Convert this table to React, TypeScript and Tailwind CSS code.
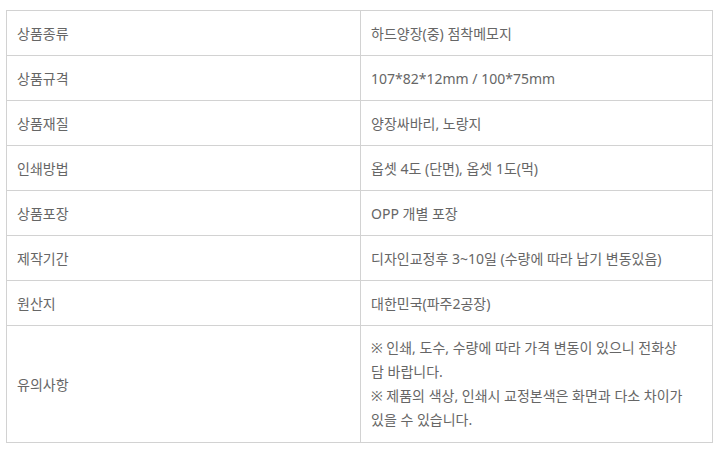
import React from "react";

const rows: [string, string][] = [
  ["상품종류", "하드양장(중) 점착메모지"],
  ["상품규격", "107*82*12mm / 100*75mm"],
  ["상품재질", "양장싸바리, 노랑지"],
  ["인쇄방법", "옵셋 4도 (단면), 옵셋 1도(먹)"],
  ["상품포장", "OPP 개별 포장"],
  ["제작기간", "디자인교정후 3~10일 (수량에 따라 납기 변동있음)"],
  ["원산지", "대한민국(파주2공장)"],
];

export default function App() {
  return (
    <div
      className="w-[720px] h-[452px] bg-white pt-[10px] pl-[6px]"
      style={{ fontFamily: '"Noto Sans", "Noto Sans CJK KR", sans-serif' }}
    >
      <table className="border-collapse w-[707px] text-[14px] text-[#666]">
        <tbody>
          {rows.map(([k, v]) => (
            <tr key={k} className="h-[45px]">
              <td className="border border-[#d2d2d2] w-[354px] pl-[10px] align-middle">{k}</td>
              <td className="border border-[#d2d2d2] pl-[10px] align-middle">{v}</td>
            </tr>
          ))}
          <tr className="h-[117px]">
            <td className="border border-[#d2d2d2] pl-[10px] align-middle">유의사항</td>
            <td className="border border-[#d2d2d2] pl-[10px] align-middle leading-[24px]">
              <div className="whitespace-nowrap">※ 인쇄, 도수, 수량에 따라 가격 변동이 있으니 전화상</div>
              <div className="whitespace-nowrap">담 바랍니다.</div>
              <div className="whitespace-nowrap">※ 제품의 색상, 인쇄시 교정본색은 화면과 다소 차이가</div>
              <div className="whitespace-nowrap">있을 수 있습니다.</div>
            </td>
          </tr>
        </tbody>
      </table>
    </div>
  );
}
